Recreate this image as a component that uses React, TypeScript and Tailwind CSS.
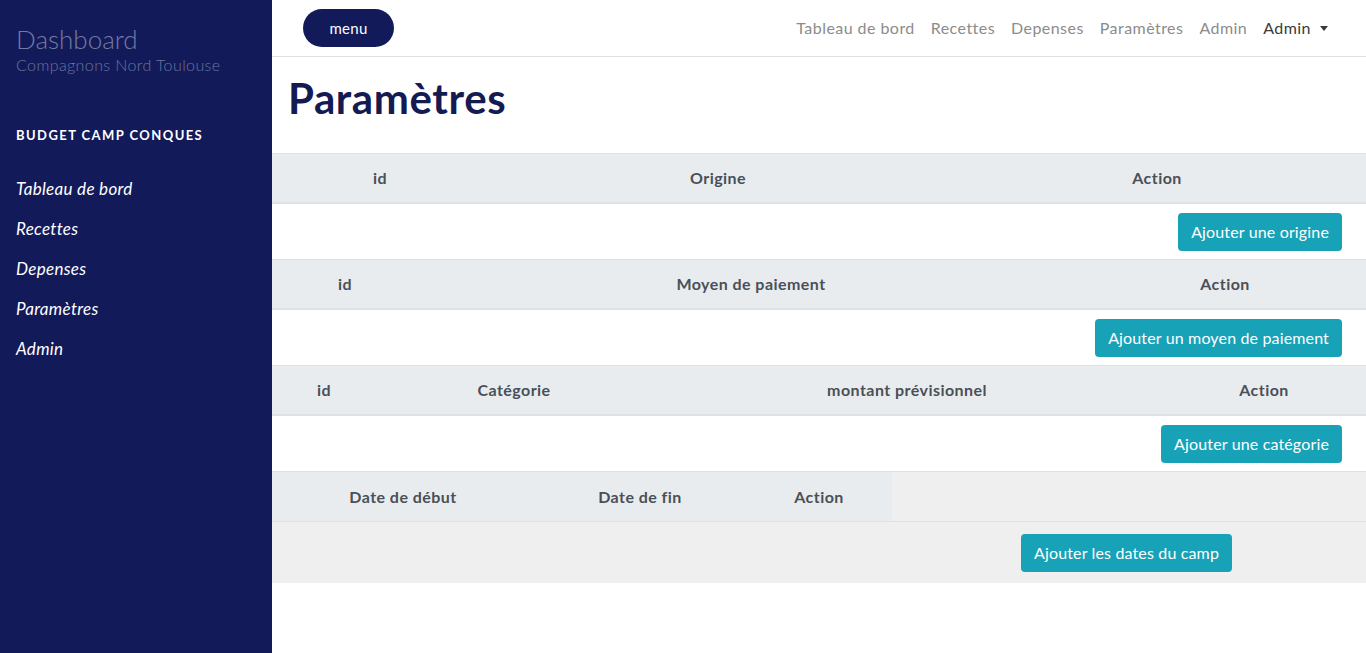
import React from "react";

const font = { fontFamily: "Lato, 'Noto Sans', sans-serif" };

function Btn({ children }: { children: React.ReactNode }) {
  return (
    <button className="h-[38px] px-[13px] rounded-[4px] bg-[#17a2b8] text-white text-[16px] tracking-[0.15px] leading-none whitespace-nowrap">
      {children}
    </button>
  );
}

function HeadRow({ cols, widths }: { cols: string[]; widths: string }) {
  return (
    <div className="border-t border-[#dee2e6] border-b-2 bg-[#e9ecef] h-[51px] grid items-center" style={{ gridTemplateColumns: widths }}>
      {cols.map((c, i) => (
        <div key={i} className="text-center font-bold text-[16px] tracking-[0.45px] text-[#495057]">
          {c}
        </div>
      ))}
    </div>
  );
}

export default function App() {
  const links = ["Tableau de bord", "Recettes", "Depenses", "Paramètres", "Admin"];
  return (
    <div className="flex w-[1366px] h-[653px] overflow-hidden bg-white" style={font}>
      <aside className="w-[272px] shrink-0 bg-[#131a5a] pl-[16px] pt-[23px]">
        <div className="text-[26px] leading-[32px] text-[#747aa0] font-light">Dashboard</div>
        <div className="text-[16px] leading-[20px] tracking-[0.4px] text-[#6d749c] font-light">Compagnons Nord Toulouse</div>
        <div className="mt-[51px] text-[13px] font-bold tracking-[0.11em] text-white">BUDGET CAMP CONQUES</div>
        <nav className="mt-[32px] flex flex-col gap-[18px]">
          {links.map((l) => (
            <div key={l} className="italic text-[17px] leading-[22px] tracking-[0.3px] text-white">
              {l}
            </div>
          ))}
        </nav>
      </aside>
      <main className="flex-1 flex flex-col">
        <header className="h-[57px] shrink-0 border-b border-[#dee2e6] flex items-center justify-between pl-[31px] pr-[38px]">
          <button className="w-[91px] h-[38px] rounded-full bg-[#131a5a] text-white text-[15px] tracking-[0.3px]">menu</button>
          <div className="flex items-center gap-[16px] text-[16px] tracking-[0.45px] text-[#8c8c8c]">
            {links.map((l) => (
              <span key={l}>{l}</span>
            ))}
            <span className="text-[#3a3a3a] flex items-center gap-[9px]">
              Admin
              <span className="w-0 h-0 border-l-[4px] border-r-[4px] border-t-[5px] border-l-transparent border-r-transparent border-t-[#3a3a3a]"></span>
            </span>
          </div>
        </header>
        <h1 className="pl-[16px] pt-[16px] h-[96px] text-[42px] font-bold tracking-[0.6px] text-[#141a52] leading-[50px]">Paramètres</h1>

        <HeadRow cols={["id", "Origine", "Action"]} widths="216px 460px 1fr" />
        <div className="h-[55px] flex items-center justify-end pr-[24px]">
          <Btn>Ajouter une origine</Btn>
        </div>

        <HeadRow cols={["id", "Moyen de paiement", "Action"]} widths="146px 666px 1fr" />
        <div className="h-[55px] flex items-center justify-end pr-[24px]">
          <Btn>Ajouter un moyen de paiement</Btn>
        </div>

        <HeadRow cols={["id", "Catégorie", "montant prévisionnel", "Action"]} widths="104px 276px 510px 1fr" />
        <div className="h-[55px] flex items-center justify-end pr-[24px]">
          <Btn>Ajouter une catégorie</Btn>
        </div>

        <div className="flex h-[51px] border-t border-[#dee2e6] border-b bg-[#efefef]">
          <div className="w-[620px] bg-[#e9ecef] grid items-center" style={{ gridTemplateColumns: "262px 212px 1fr" }}>
            {["Date de début", "Date de fin", "Action"].map((c) => (
              <div key={c} className="text-center font-bold text-[16px] tracking-[0.45px] text-[#495057]">
                {c}
              </div>
            ))}
          </div>
        </div>
        <div className="h-[61px] bg-[#efefef] flex items-center pl-[749px]">
          <Btn>Ajouter les dates du camp</Btn>
        </div>
      </main>
    </div>
  );
}
